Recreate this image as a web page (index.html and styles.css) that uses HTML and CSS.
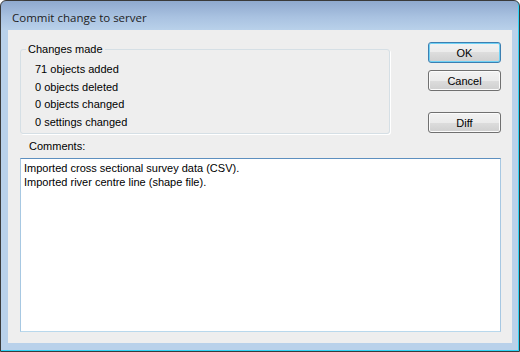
FILE: index.html
```html
<!DOCTYPE html>
<html lang="en">
<head>
  <meta charset="UTF-8" />
  <title>Commit change to server</title>
  <link rel="stylesheet" href="styles.css">
</head>
<body>

  <div class="window">
    <!-- title bar -->
    <div class="titlebar">Commit change to server</div>

    <div class="client">
      <div class="top-row">
        <fieldset class="group">
          <legend>Changes made</legend>
          <div class="line">71 objects added</div>
          <div class="line">0 objects deleted</div>
          <div class="line">0 objects changed</div>
          <div class="line">0 settings changed</div>
        </fieldset>

        <div class="buttons">
          <button class="btn default">OK</button>
          <button class="btn">Cancel</button>
          <button class="btn diff">Diff</button>
        </div>
      </div>

      <div class="label">Comments:</div>
      <div class="comments">Imported cross sectional survey data (CSV).
Imported river centre line (shape file).</div>
    </div>
  </div>

</body>
</html>
```

FILE: styles.css
```css
html, body {
  margin: 0;
  padding: 0;
  background: #ffffff;
}

.window {
  width: 520px;
  height: 352px;
  box-sizing: border-box;
  border: 1px solid #3a3a3a;
  border-radius: 6px 6px 0 0;
  background: linear-gradient(#8fa9ce 0px, #a9c2e1 16px, #b9d1ea 29px, #b9d1ea 100%);
  box-shadow: inset -1px -1px 0 #2fd3f5;
  display: flex;
  flex-direction: column;
  font-family: "Liberation Sans", Arial, sans-serif;
  font-size: 11px;
  color: #000;
}

.titlebar {
  height: 24px;
  padding: 5px 0 0 11px;
  line-height: 24px;
  font-family: "Open Sans", "Noto Sans", sans-serif;
  font-size: 11.5px;
  color: #1e1e1e;
  flex: none;
}

.client {
  flex: 1;
  margin: 0 7px 8px 7px;
  background: #eeeeee;
  padding: 12px 11px 11px 12px;
  display: flex;
  flex-direction: column;
}

.top-row {
  display: flex;
  justify-content: space-between;
  align-items: flex-start;
}

.group {
  width: 370px;
  height: 91px;
  box-sizing: border-box;
  margin: 1px 0 0 0;
  padding: 5px 0 0 14px;
  border: 1px solid #d5dfe5;
  border-radius: 3px;
  box-shadow: 1px 1px 0 #ffffff;
  min-width: 0;
}

.group legend {
  padding: 0 2px;
  margin-left: -9px;
  line-height: 13px;
}

.line {
  height: 17.5px;
  line-height: 17.5px;
}

.buttons {
  display: flex;
  flex-direction: column;
  gap: 7px;
  width: 73px;
}

.btn {
  width: 73px;
  height: 21px;
  padding: 0;
  margin: 0;
  font-family: "Liberation Sans", Arial, sans-serif;
  font-size: 11px;
  color: #000;
  border: 1px solid #707070;
  border-radius: 3px;
  background: linear-gradient(#f2f2f2 0%, #ebebeb 50%, #dddddd 50%, #cfcfcf 100%);
  box-shadow: inset 0 0 0 1px #fbfbfb;
}

.btn.default {
  border-color: #3c7fb1;
  box-shadow: inset 0 0 0 1px #6fd1f5;
}

.btn.diff {
  margin-top: 14px;
}

.label {
  margin: 2px 0 0 9px;
  height: 22px;
  line-height: 20px;
}

.comments {
  flex: 1;
  background: #ffffff;
  border: 1px solid;
  border-color: #5d8fbf #a7c8e2 #b9d8ec #a7c8e2;
  padding: 2px 3px;
  line-height: 14px;
  white-space: pre-line;
}
```
